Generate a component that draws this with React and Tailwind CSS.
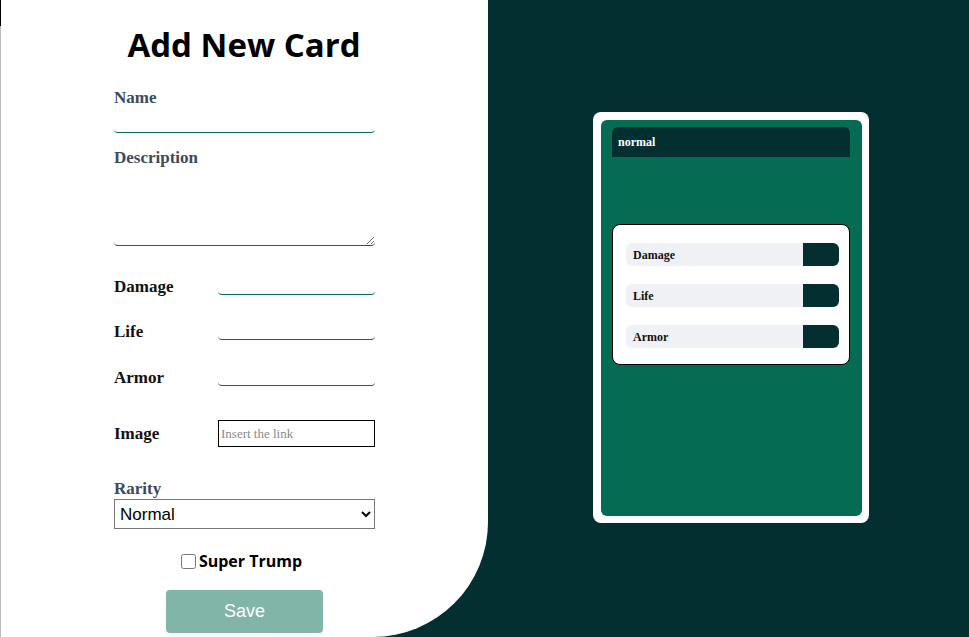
import React, { useState } from 'react';

const serif = { fontFamily: '"Liberation Serif", serif' };

const StatRow = ({ label }) => (
  <div className="flex h-[23px] items-center rounded-md bg-[#f0f1f4]">
    <span className="flex-1 pl-[7px] text-[12px] font-bold text-[#111]">{label}</span>
    <div className="h-full w-[36px] rounded-r-md bg-[#032f30]"></div>
  </div>
);

const App = () => {
  const [rarity, setRarity] = useState('normal');
  const [trump, setTrump] = useState(false);

  return (
    <div className="flex h-[637px] w-[969px] overflow-hidden bg-[#032f30]" style={serif}>
      <div className="relative h-full w-[488px] shrink-0 rounded-br-[115px] bg-white">
        <div className="absolute left-0 top-0 h-full w-px bg-[#b9b9b9]">
          <div className="h-[26px] w-px bg-black"></div>
        </div>
        <h1
          className="pt-[24px] text-center text-[33px] font-bold leading-[42px] text-black"
          style={{ fontFamily: '"Open Sans", sans-serif' }}
        >
          Add New Card
        </h1>
        <form className="ml-[114px] mt-[21px] flex w-[261px] flex-col">
          <label className="text-[17px] font-bold leading-[22px] text-[#3d4a5c]">Name</label>
          <input
            type="text"
            className="mt-[4px] h-[20px] rounded-sm border-b border-[#056b52] outline-none"
          />
          <label className="mt-[14px] text-[17px] font-bold leading-[22px] text-[#3d4a5c]">
            Description
          </label>
          <textarea className="mt-[2px] h-[75px] rounded-sm border-b border-[#056b52] outline-none"></textarea>

          <div className="mt-[30px] flex items-start">
            <label className="w-[104px] shrink-0 text-[17px] font-bold leading-[22px] text-[#111]">Damage</label>
            <input type="number" className="h-[19px] min-w-0 flex-1 rounded-sm border-b border-[#056b52] outline-none" />
          </div>
          <div className="mt-[23px] flex items-start">
            <label className="w-[104px] shrink-0 text-[17px] font-bold leading-[22px] text-[#111]">Life</label>
            <input type="number" className="h-[19px] min-w-0 flex-1 rounded-sm border-b border-[#056b52] outline-none" />
          </div>
          <div className="mt-[24px] flex items-start">
            <label className="w-[104px] shrink-0 text-[17px] font-bold leading-[22px] text-[#111]">Armor</label>
            <input type="number" className="h-[19px] min-w-0 flex-1 rounded-sm border-b border-[#056b52] outline-none" />
          </div>

          <div className="mt-[31px] flex items-center">
            <label className="w-[104px] shrink-0 text-[17px] font-bold leading-[22px] text-[#111]">Image</label>
            <input
              type="text"
              placeholder="Insert the link"
              className="h-[27px] min-w-0 flex-1 border border-black px-[2px] text-[13px] outline-none placeholder:text-[#8a8a8a]"
            />
          </div>

          <label className="mt-[32px] text-[17px] font-bold leading-[20px] text-[#3d4a5c]">Rarity</label>
          <select
            value={rarity}
            onChange={(e) => setRarity(e.target.value)}
            className="h-[30px] border border-[#767676] bg-white px-[1px] text-[17px] text-black"
            style={{ fontFamily: '"Liberation Sans", sans-serif' }}
          >
            <option value="normal">Normal</option>
            <option value="rare">Rare</option>
            <option value="epic">Epic</option>
            <option value="legendary">Legendary</option>
          </select>

          <div className="mt-[22px] flex items-center justify-center gap-[3px] pr-[6px]">
            <input
              type="checkbox"
              checked={trump}
              onChange={(e) => setTrump(e.target.checked)}
              className="m-0 h-[15px] w-[15px]"
            />
            <span
              className="text-[16px] font-bold leading-[20px] text-black"
              style={{ fontFamily: '"Open Sans", sans-serif' }}
            >
              Super Trump
            </span>
          </div>

          <button
            type="button"
            className="mx-auto mt-[19px] h-[43px] w-[157px] rounded-sm bg-[#80b5a8] text-[18px] text-white"
            style={{ fontFamily: '"Liberation Sans", sans-serif' }}
          >
            Save
          </button>
        </form>
      </div>

      <div className="flex flex-1 items-start pl-[105px] pt-[112px]">
        <div className="h-[411px] w-[276px] rounded-lg bg-white pb-[7px] pl-[8px] pr-[7px] pt-[8px]">
          <div className="flex h-full flex-col rounded-md bg-[#056b52] pl-[11px] pr-[12px] pt-[7px]">
            <div className="flex h-[30px] items-center rounded-t-md bg-[#032f30] px-[6px]">
              <span className="text-[12px] font-bold text-white">normal</span>
            </div>
            <div className="mt-[67px] flex h-[141px] flex-col gap-[18px] rounded-lg border border-black bg-white pl-[13px] pr-[10px] pt-[18px]">
              <StatRow label="Damage" />
              <StatRow label="Life" />
              <StatRow label="Armor" />
            </div>
          </div>
        </div>
      </div>
    </div>
  );
};

export default App;
